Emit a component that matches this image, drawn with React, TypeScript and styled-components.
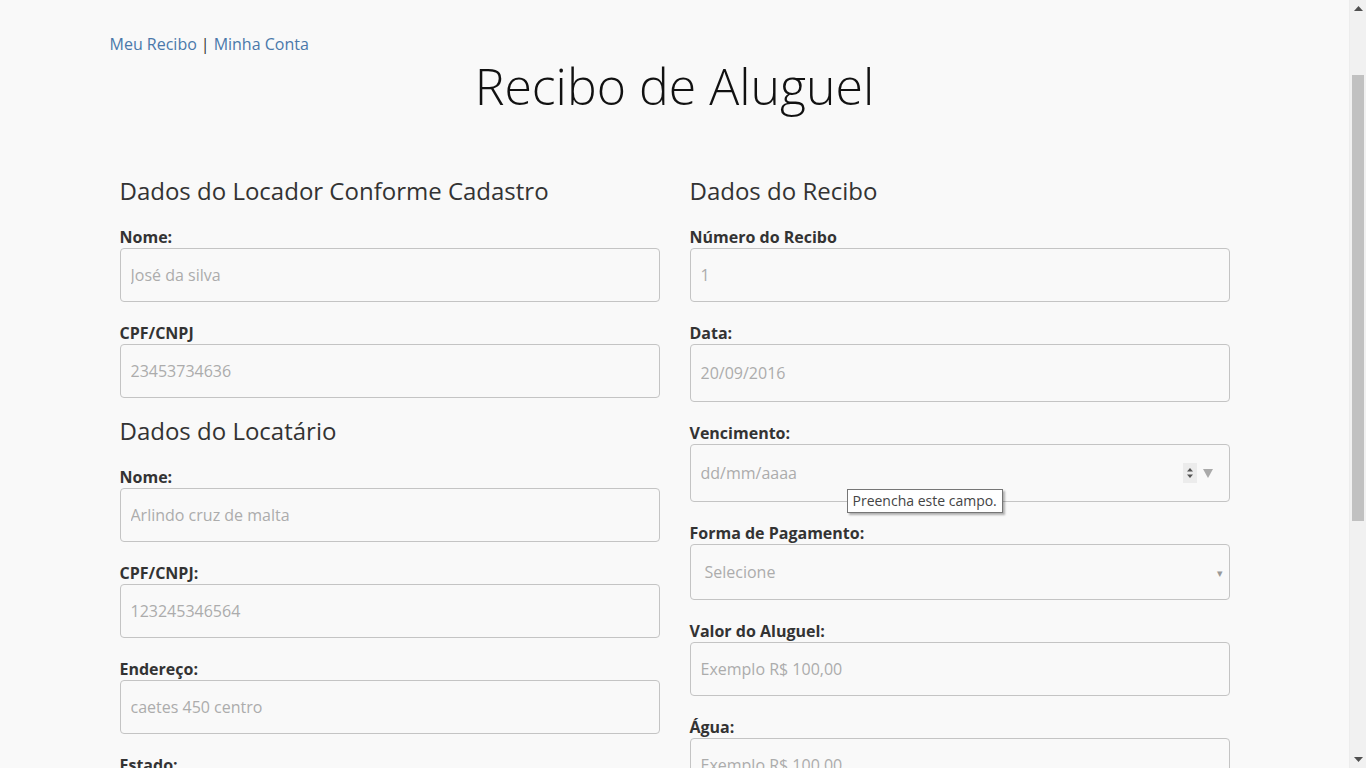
import React from "react";
import styled, { createGlobalStyle } from "styled-components";

const GlobalStyle = createGlobalStyle`
  body {
    margin: 0;
    padding-right: 17px;
    background: #f9f9f9;
    font-family: "Open Sans", "Liberation Sans", sans-serif;
    color: #333;
  }
  * {
    box-sizing: border-box;
  }
`;

interface FieldProps {
  label: string;
  placeholder: string;
}

function Field({ label, placeholder }: FieldProps) {
  return (
    <Group>
      <Label>{label}</Label>
      <Input type="text" placeholder={placeholder} />
    </Group>
  );
}

function DateField({
  label,
  placeholder,
  controls,
  tooltip,
}: FieldProps & { controls?: boolean; tooltip?: string }) {
  return (
    <Group>
      <Label>{label}</Label>
      <DateBox>
        <BareInput type="text" placeholder={placeholder} />
        {controls && (
          <>
            <Spinner>
              <svg width="8" height="14" viewBox="0 0 8 14">
                <path d="M4 2 L7 5.5 L1 5.5 Z" fill="#555" />
                <path d="M4 12 L7 8.5 L1 8.5 Z" fill="#555" />
              </svg>
            </Spinner>
            <DropArrow>
              <svg width="10" height="9" viewBox="0 0 10 9">
                <path d="M0 0 L10 0 L5 9 Z" fill="#aaa" />
              </svg>
            </DropArrow>
          </>
        )}
        {tooltip && <Tooltip>{tooltip}</Tooltip>}
      </DateBox>
    </Group>
  );
}

function SelectField({ label, placeholder }: FieldProps) {
  return (
    <Group>
      <Label>{label}</Label>
      <SelectBox>
        <span>{placeholder}</span>
        <SelectArrow>▾</SelectArrow>
      </SelectBox>
    </Group>
  );
}

function ScrollBar() {
  return (
    <Track>
      <ScrollArrow>
        <svg width="9" height="5" viewBox="0 0 9 5">
          <path d="M4.5 0 L9 5 L0 5 Z" fill="#505050" />
        </svg>
      </ScrollArrow>
      <ThumbArea>
        <Thumb />
      </ThumbArea>
      <ScrollArrow>
        <svg width="9" height="5" viewBox="0 0 9 5">
          <path d="M0 0 L9 0 L4.5 5 Z" fill="#505050" />
        </svg>
      </ScrollArrow>
    </Track>
  );
}

export default function App() {
  return (
    <>
      <GlobalStyle />
      <Page>
        <Nav>
          <NavLink href="#">Meu Recibo</NavLink>
          <Sep>|</Sep>
          <NavLink href="#">Minha Conta</NavLink>
        </Nav>
        <Title>Recibo de Aluguel</Title>

        <Columns>
          <Column>
            <SectionTitle>Dados do Locador Conforme Cadastro</SectionTitle>
            <Field label="Nome:" placeholder="José da silva" />
            <Field label="CPF/CNPJ" placeholder="23453734636" />

            <SectionTitle>Dados do Locatário</SectionTitle>
            <Field label="Nome:" placeholder="Arlindo cruz de malta" />
            <Field label="CPF/CNPJ:" placeholder="123245346564" />
            <Field label="Endereço:" placeholder="caetes 450 centro" />
            <Field label="Estado:" placeholder="SP" />
            <Field label="Cidade:" placeholder="São Paulo" />
          </Column>

          <Column>
            <SectionTitle>Dados do Recibo</SectionTitle>
            <Field label="Número do Recibo" placeholder="1" />
            <DateField label="Data:" placeholder="20/09/2016" />
            <DateField
              label="Vencimento:"
              placeholder="dd/mm/aaaa"
              controls
              tooltip="Preencha este campo."
            />
            <SelectField label="Forma de Pagamento:" placeholder="Selecione" />
            <Field label="Valor do Aluguel:" placeholder="Exemplo R$ 100,00" />
            <Field label="Água:" placeholder="Exemplo R$ 100,00" />
            <Field label="Luz:" placeholder="Exemplo R$ 100,00" />
          </Column>
        </Columns>
      </Page>
      <ScrollBar />
    </>
  );
}

const Page = styled.div`
  width: 1140px;
  margin: 0 auto;
  padding: 33px 15px 40px;
`;

const Nav = styled.div`
  margin-left: -10px;
  font-size: 16px;
  line-height: 22px;
`;

const NavLink = styled.a`
  color: #4a78aa;
  text-decoration: none;
`;

const Sep = styled.span`
  color: #333;
  margin: 0 4px;
`;

const Title = styled.h1`
  margin: 2px 0 63px;
  font-size: 50px;
  font-weight: 300;
  line-height: 58px;
  color: #111;
  text-align: center;
`;

const Columns = styled.div`
  display: grid;
  grid-template-columns: 1fr 1fr;
  column-gap: 30px;
  align-items: start;
`;

const Column = styled.div`
  display: flex;
  flex-direction: column;
`;

const SectionTitle = styled.h3`
  margin: 0 0 22px;
  font-size: 24px;
  font-weight: 400;
  line-height: 26px;
  color: #333;
`;

const Group = styled.div`
  margin-bottom: 20px;
`;

const Label = styled.label`
  display: block;
  font-size: 16px;
  font-weight: 700;
  line-height: 22px;
  color: #333;
`;

const Input = styled.input`
  display: block;
  width: 100%;
  height: 54px;
  padding: 0 10px;
  border: 1px solid #c4c4c4;
  border-radius: 4px;
  background: #f9f9f9;
  font-family: inherit;
  font-size: 16px;
  color: #333;

  &::placeholder {
    color: #acacac;
  }
`;

const DateBox = styled.div`
  position: relative;
  display: flex;
  align-items: center;
  height: 58px;
  padding: 0 16px 0 10px;
  border: 1px solid #c4c4c4;
  border-radius: 4px;
  background: #f9f9f9;
`;

const BareInput = styled.input`
  flex: 1;
  min-width: 0;
  border: none;
  background: transparent;
  font-family: inherit;
  font-size: 16px;
  padding: 0;
  outline: none;

  &::placeholder {
    color: #acacac;
  }
`;

const Spinner = styled.div`
  display: flex;
  align-items: center;
  justify-content: center;
  width: 14px;
  height: 20px;
  background: #ececec;
  margin-right: 6px;
`;

const DropArrow = styled.div`
  display: flex;
  align-items: center;
  width: 10px;
`;

const Tooltip = styled.div`
  position: absolute;
  left: 156px;
  top: 44px;
  padding: 1px 5px 2px;
  background: #fff;
  border: 1px solid #767676;
  box-shadow: 2px 2px 2px rgba(0, 0, 0, 0.3);
  font-size: 14px;
  line-height: 19px;
  color: #444;
  white-space: nowrap;
  z-index: 2;
`;

const SelectBox = styled.div`
  display: flex;
  align-items: center;
  justify-content: space-between;
  height: 56px;
  padding: 0 6px 0 14px;
  border: 1px solid #c4c4c4;
  border-radius: 4px;
  background: #f9f9f9;
  font-size: 16px;
  color: #acacac;
`;

const SelectArrow = styled.span`
  font-size: 11px;
  color: #999;
`;

const Track = styled.div`
  position: fixed;
  top: 0;
  right: 0;
  width: 17px;
  height: 100vh;
  display: flex;
  flex-direction: column;
  background: #f1f1f1;
  border-left: 1px solid #ededed;
`;

const ScrollArrow = styled.div`
  height: 17px;
  display: flex;
  align-items: center;
  justify-content: center;
`;

const ThumbArea = styled.div`
  flex: 1;
  padding: 58px 2px 0;
`;

const Thumb = styled.div`
  height: 446px;
  background: #c1c1c1;
`;
